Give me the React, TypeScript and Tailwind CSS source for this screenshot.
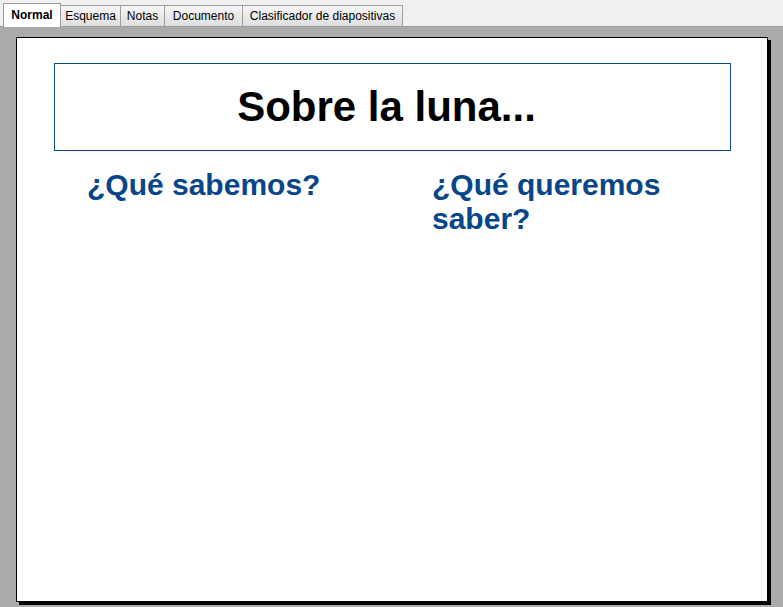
import React from 'react';

const TABS = [
  { label: 'Normal', width: 'w-[58px]', active: true },
  { label: 'Esquema', width: 'w-[60px]', active: false },
  { label: 'Notas', width: 'w-[44px]', active: false },
  { label: 'Documento', width: 'w-[78px]', active: false },
  { label: 'Clasificador de diapositivas', width: 'w-[160px]', active: false },
];

function TabBar() {
  return (
    <div className="flex h-[27px] items-end border-b border-[#9c9c9c] bg-[#f0f0f0] pl-[3px]">
      {TABS.map((tab) =>
        tab.active ? (
          <div
            key={tab.label}
            className={`${tab.width} relative z-10 -mb-px flex h-[24px] items-center justify-center border border-b-0 border-[#9c9c9c] bg-white pb-[2px] text-[12px] font-bold text-black`}
          >
            {tab.label}
          </div>
        ) : (
          <div
            key={tab.label}
            className={`${tab.width} flex h-[21px] items-center justify-center border border-l-0 border-b-0 border-[#9c9c9c] bg-gradient-to-b from-[#f6f6f6] to-[#dedede] text-[12px] text-black`}
          >
            {tab.label}
          </div>
        ),
      )}
    </div>
  );
}

function Slide() {
  return (
    <div className="h-[565px] w-[752px] border border-black bg-white shadow-[3px_3px_0_#000]">
      <div className="ml-[37px] mt-[25px] flex h-[88px] w-[677px] items-center justify-center border border-[#0d4c8f] pr-[12px]">
        <h1 className="text-[42px] font-bold leading-none text-black">Sobre la luna...</h1>
      </div>
      <div className="ml-[70px] mt-[17px] flex">
        <h2 className="w-[345px] text-[30px] font-bold leading-[34px] text-[#074688]">¿Qué sabemos?</h2>
        <h2 className="w-[290px] text-[30px] font-bold leading-[34px] text-[#074688]">¿Qué queremos saber?</h2>
      </div>
    </div>
  );
}

export default function App() {
  return (
    <div
      className="flex h-[607px] w-[783px] flex-col overflow-hidden bg-[#ababab]"
      style={{ fontFamily: '"Liberation Sans", Arial, sans-serif' }}
    >
      <TabBar />
      <div className="pl-[16px] pt-[10px]">
        <Slide />
      </div>
    </div>
  );
}
